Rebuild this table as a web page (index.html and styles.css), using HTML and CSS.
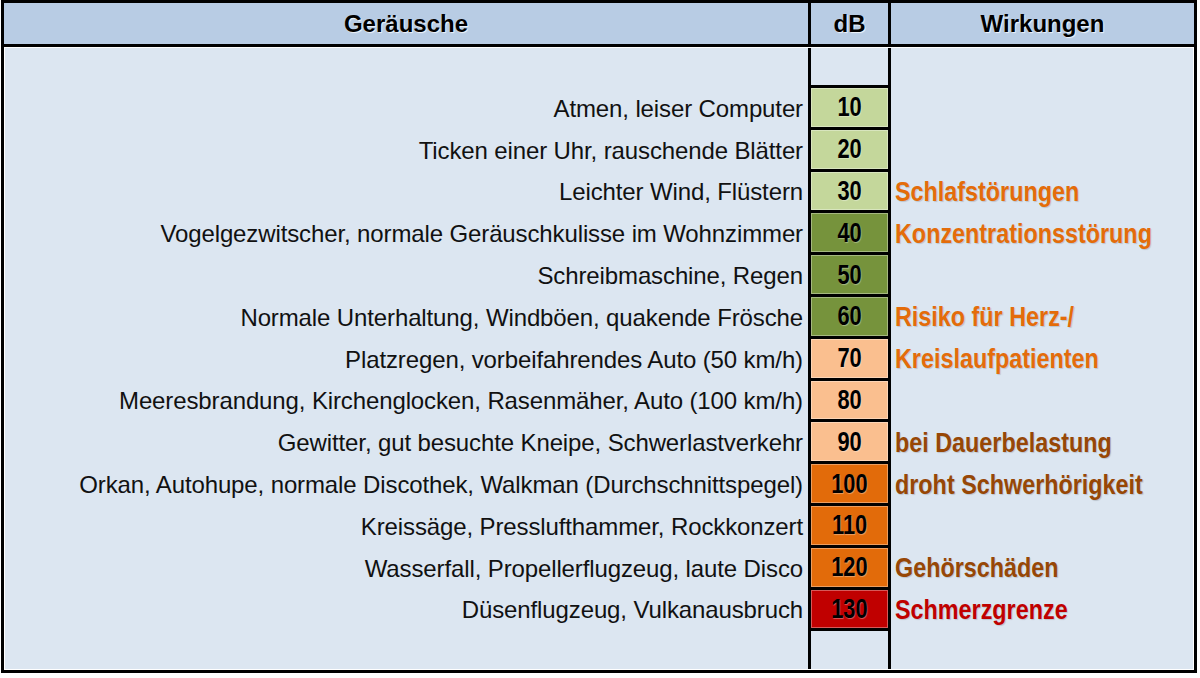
FILE: index.html
```html
<!DOCTYPE html>
<html lang="de">
<head>
<meta charset="utf-8">
<title>Geräusche und Wirkungen</title>
<link rel="stylesheet" href="styles.css">
</head>
<body>
<div class="frame">
  <div class="head">
    <div class="hcell">Geräusche</div>
    <div class="hcell sep">dB</div>
    <div class="hcell sep">Wirkungen</div>
  </div>
  <div class="grid">
    <div class="txt"></div><div class="db empty"></div><div class="wk"></div>

    <div class="txt">Atmen, leiser Computer</div><div class="db g1"><span>10</span></div><div class="wk"></div>
    <div class="txt">Ticken einer Uhr, rauschende Blätter</div><div class="db g1"><span>20</span></div><div class="wk"></div>
    <div class="txt">Leichter Wind, Flüstern</div><div class="db g1"><span>30</span></div><div class="wk"><span class="or">Schlafstörungen</span></div>
    <div class="txt">Vogelgezwitscher, normale Geräuschkulisse im Wohnzimmer</div><div class="db g2"><span>40</span></div><div class="wk"><span class="or">Konzentrationsstörung</span></div>
    <div class="txt">Schreibmaschine, Regen</div><div class="db g2"><span>50</span></div><div class="wk"></div>
    <div class="txt">Normale Unterhaltung, Windböen, quakende Frösche</div><div class="db g2"><span>60</span></div><div class="wk"><span class="or">Risiko für Herz-/</span></div>
    <div class="txt">Platzregen, vorbeifahrendes Auto (50 km/h)</div><div class="db p1"><span>70</span></div><div class="wk"><span class="or">Kreislaufpatienten</span></div>
    <div class="txt">Meeresbrandung, Kirchenglocken, Rasenmäher, Auto (100 km/h)</div><div class="db p1"><span>80</span></div><div class="wk"></div>
    <div class="txt">Gewitter, gut besuchte Kneipe, Schwerlastverkehr</div><div class="db p1"><span>90</span></div><div class="wk"><span class="br">bei Dauerbelastung</span></div>
    <div class="txt">Orkan, Autohupe, normale Discothek, Walkman (Durchschnittspegel)</div><div class="db o1"><span>100</span></div><div class="wk"><span class="br">droht Schwerhörigkeit</span></div>
    <div class="txt">Kreissäge, Presslufthammer, Rockkonzert</div><div class="db o1"><span>110</span></div><div class="wk"></div>
    <div class="txt">Wasserfall, Propellerflugzeug, laute Disco</div><div class="db o1"><span>120</span></div><div class="wk"><span class="br">Gehörschäden</span></div>
    <div class="txt">Düsenflugzeug, Vulkanausbruch</div><div class="db r1"><span>130</span></div><div class="wk"><span class="rd">Schmerzgrenze</span></div>

    <div class="txt"></div><div class="db empty last"></div><div class="wk"></div>
  </div>
</div>
</body>
</html>
```

FILE: styles.css
```css
* { box-sizing: border-box; }
html, body { margin: 0; padding: 0; background: #fff; }
body { font-family: "Liberation Sans", Arial, sans-serif; color: #000; }

.frame {
  margin-left: 1px;
  width: 1196px;
  height: 673px;
  border: 3px solid #000;
  display: flex;
  flex-direction: column;
  background: #dce6f1;
}

.head {
  display: grid;
  grid-template-columns: 804px 80px 1fr;
  height: 44px;
  border-bottom: 3px solid #000;
  background: #b8cce4;
}
.hcell {
  display: flex;
  align-items: center;
  justify-content: center;
  font-weight: bold;
  font-size: 24px;
  text-shadow: 1px 1px 1px rgba(255,255,255,0.8);
}
.hcell.sep { border-left: 3px solid #000; }

.grid {
  flex: 1;
  display: grid;
  grid-template-columns: 803px 83px 1fr;
  grid-template-rows: 40px repeat(13, 41.8px) 1fr;
  padding: 1px 1px 1px 1px;
  background: #fff;
}
.txt {
  background: #dce6f1;
  display: flex;
  align-items: center;
  justify-content: flex-end;
  padding-right: 5px;
  font-size: 24px;
  letter-spacing: -0.12px;
  color: #111;
  white-space: nowrap;
}
.db {
  border-left: 3px solid #000;
  border-right: 3px solid #000;
  border-bottom: 3px solid #000;
  display: flex;
  align-items: center;
  justify-content: center;
  font-weight: bold;
  font-size: 28px;
  box-shadow: inset 0 0 0 1px rgba(255,255,255,0.35);
}
.db span {
  display: inline-block;
  transform: scaleX(0.78);
  text-shadow: 1px 1px 1px rgba(255,255,255,0.35);
}
.db.empty { background: #dce6f1; box-shadow: none; }
.db.last { border-bottom: 0; }
.g1 { background: #c4d79b; }
.g2 { background: #76933c; }
.p1 { background: #fabf8f; }
.o1 { background: #e26b0a; }
.r1 { background: #c00000; }

.wk {
  background: #dce6f1;
  display: flex;
  align-items: center;
  padding-left: 4px;
  font-weight: bold;
  font-size: 27px;
  white-space: nowrap;
}
.wk span {
  display: inline-block;
  transform: scaleX(0.865);
  transform-origin: left center;
  text-shadow: 1px 1px 1px rgba(0,0,0,0.15);
}
.or { color: #e46c0a; }
.br { color: #974706; }
.rd { color: #c00000; }
```
